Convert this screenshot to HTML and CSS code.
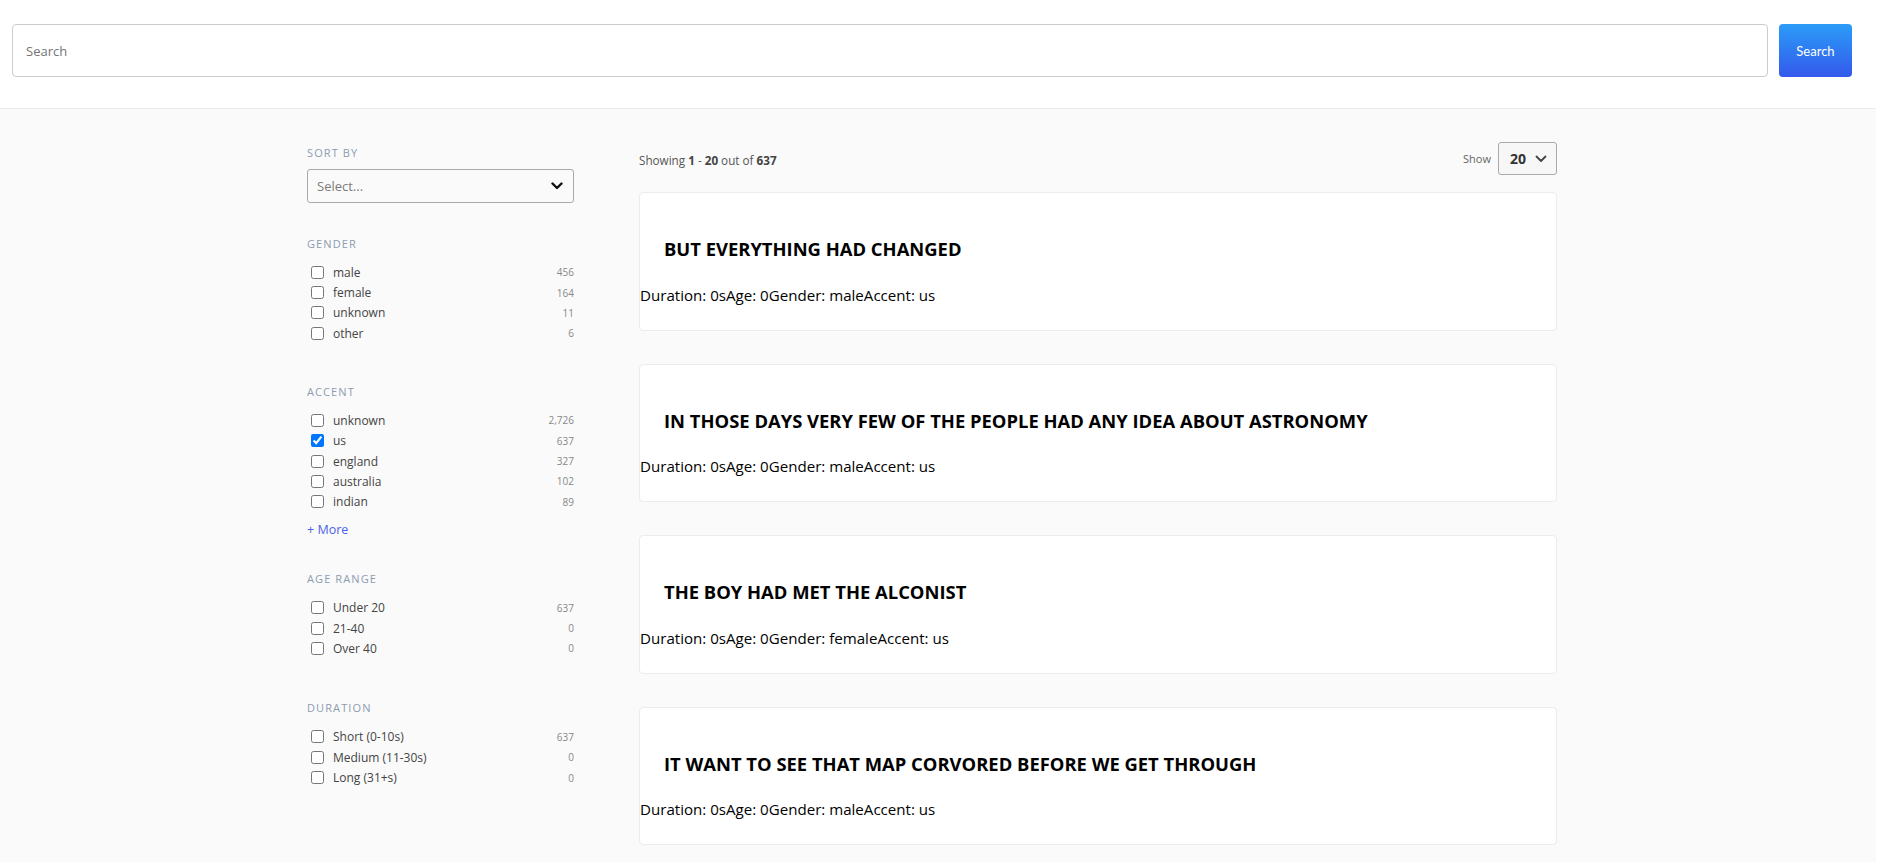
FILE: index.html
```html
<!DOCTYPE html>
<html lang="en">
<head>
<meta charset="utf-8">
<title>Search</title>
<link rel="stylesheet" href="styles.css">
</head>
<body>
<div class="page">
  <header class="topbar">
    <input class="search-input" type="text" placeholder="Search">
    <button class="search-btn">Search</button>
  </header>
  <div class="layout">
    <aside class="sidebar">
      <div class="sort">
        <div class="section-title">Sort by</div>
        <div class="select">
          <span class="select-placeholder">Select...</span>
          <svg class="chev" width="12" height="8" viewBox="0 0 12 8"><path d="M1.5 1.5 L6 6 L10.5 1.5" fill="none" stroke="#111" stroke-width="2.4" stroke-linecap="round" stroke-linejoin="round"/></svg>
        </div>
      </div>

      <div class="filter">
        <div class="section-title">Gender</div>
        <ul class="options">
          <li><label><input type="checkbox"><span>male</span></label><span class="count">456</span></li>
          <li><label><input type="checkbox"><span>female</span></label><span class="count">164</span></li>
          <li><label><input type="checkbox"><span>unknown</span></label><span class="count">11</span></li>
          <li><label><input type="checkbox"><span>other</span></label><span class="count">6</span></li>
        </ul>
      </div>

      <div class="filter">
        <div class="section-title">Accent</div>
        <ul class="options">
          <li><label><input type="checkbox"><span>unknown</span></label><span class="count">2,726</span></li>
          <li><label><input type="checkbox" checked><span>us</span></label><span class="count">637</span></li>
          <li><label><input type="checkbox"><span>england</span></label><span class="count">327</span></li>
          <li><label><input type="checkbox"><span>australia</span></label><span class="count">102</span></li>
          <li><label><input type="checkbox"><span>indian</span></label><span class="count">89</span></li>
        </ul>
        <a class="more" href="#">+ More</a>
      </div>

      <div class="filter after-more">
        <div class="section-title">Age range</div>
        <ul class="options">
          <li><label><input type="checkbox"><span>Under 20</span></label><span class="count">637</span></li>
          <li><label><input type="checkbox"><span>21-40</span></label><span class="count">0</span></li>
          <li><label><input type="checkbox"><span>Over 40</span></label><span class="count">0</span></li>
        </ul>
      </div>

      <div class="filter last">
        <div class="section-title">Duration</div>
        <ul class="options">
          <li><label><input type="checkbox"><span>Short (0-10s)</span></label><span class="count">637</span></li>
          <li><label><input type="checkbox"><span>Medium (11-30s)</span></label><span class="count">0</span></li>
          <li><label><input type="checkbox"><span>Long (31+s)</span></label><span class="count">0</span></li>
        </ul>
      </div>
    </aside>

    <main class="results">
      <div class="results-bar">
        <div class="stats">Showing <b>1</b> - <b>20</b> out of <b>637</b></div>
        <div class="show">
          <span>Show</span>
          <div class="show-select">
            <b>20</b>
            <svg width="12" height="8" viewBox="0 0 12 8"><path d="M1.5 1.5 L6 6 L10.5 1.5" fill="none" stroke="#444" stroke-width="1.8" stroke-linecap="round" stroke-linejoin="round"/></svg>
          </div>
        </div>
      </div>

      <div class="card">
        <div class="card-head"><h3>BUT EVERYTHING HAD CHANGED</h3></div>
        <div class="card-meta">Duration: 0sAge: 0Gender: maleAccent: us</div>
      </div>
      <div class="card">
        <div class="card-head"><h3>IN THOSE DAYS VERY FEW OF THE PEOPLE HAD ANY IDEA ABOUT ASTRONOMY</h3></div>
        <div class="card-meta">Duration: 0sAge: 0Gender: maleAccent: us</div>
      </div>
      <div class="card">
        <div class="card-head"><h3>THE BOY HAD MET THE ALCONIST</h3></div>
        <div class="card-meta">Duration: 0sAge: 0Gender: femaleAccent: us</div>
      </div>
      <div class="card">
        <div class="card-head"><h3>IT WANT TO SEE THAT MAP CORVORED BEFORE WE GET THROUGH</h3></div>
        <div class="card-meta">Duration: 0sAge: 0Gender: maleAccent: us</div>
      </div>
    </main>
  </div>
</div>
</body>
</html>
```
FILE: styles.css
```css
* { box-sizing: border-box; }
html, body {
  margin: 0;
  padding: 0;
  height: 100%;
  background: #ffffff;
  font-family: "Open Sans", "Noto Sans", sans-serif;
  color: #333;
}
.page {
  width: 1876px;
  min-height: 100%;
  background: #fafafa;
}
.topbar {
  display: flex;
  align-items: stretch;
  gap: 11px;
  padding: 24px 24px 31px 12px;
  background: #fff;
  border-bottom: 1px solid #ebebeb;
}
.search-input {
  flex: 1;
  height: 53px;
  border: 1px solid #cccccc;
  border-radius: 4px;
  padding: 0 13px;
  font-family: inherit;
  font-size: 13px;
  color: #333;
  outline: none;
}
.search-input::placeholder { color: #757575; }
.search-btn {
  width: 73px;
  height: 53px;
  border: none;
  border-radius: 4px;
  background: linear-gradient(180deg, #2b9cf8 0%, #3359eb 100%);
  color: #fff;
  font-family: Lato, "Open Sans", sans-serif;
  font-size: 13px;
  padding: 0;
}
.layout {
  display: flex;
  gap: 65px;
  width: 1250px;
  margin-left: 307px;
  padding-top: 33px;
  padding-bottom: 20px;
}
.sidebar {
  width: 267px;
  flex: none;
  padding-top: 3.5px;
}
.section-title {
  font-size: 11px;
  line-height: 14px;
  letter-spacing: 0.1em;
  color: #8d9cb0;
  text-transform: uppercase;
}
.select {
  margin-top: 9px;
  height: 34px;
  border: 1px solid #a8a8a8;
  border-radius: 3px;
  background: #fafafa;
  display: flex;
  align-items: center;
  justify-content: space-between;
  padding: 0 10px 0 9px;
}
.select-placeholder {
  font-size: 13px;
  color: #7a7a7a;
}
.filter { margin-top: 34px; }
.filter + .filter { margin-top: 41px; }
.filter.after-more { margin-top: 34px; }
.filter.last { margin-top: 42.5px; }
.options {
  list-style: none;
  margin: 11.5px 0 0;
  padding: 0;
}
.options li {
  display: flex;
  align-items: center;
  justify-content: space-between;
  height: 20.4px;
}
.options label {
  display: flex;
  align-items: center;
  font-size: 12px;
  color: #444;
}
.options input {
  margin: 0 9px 0 4px;
  width: 13px;
  height: 13px;
}
.count {
  font-size: 10px;
  color: #888;
}
.more {
  display: block;
  margin-top: 10px;
  line-height: 16px;
  font-size: 12.5px;
  color: #4a62e8;
  text-decoration: none;
}
.results {
  width: 918px;
  flex: none;
}
.results-bar {
  display: flex;
  align-items: center;
  justify-content: space-between;
  height: 33px;
  margin-bottom: 17px;
}
.stats {
  font-size: 11.7px;
  color: #555;
  padding-top: 3px;
}
.stats b { color: #444; }
.show {
  display: flex;
  align-items: center;
  gap: 7px;
  font-size: 11px;
  color: #666;
}
.show-select {
  width: 59px;
  height: 33px;
  border: 1px solid #aaa;
  border-radius: 3px;
  background: #f7f7f7;
  display: flex;
  align-items: center;
  gap: 9px;
  padding-left: 11px;
}
.show-select b {
  font-size: 14px;
  color: #333;
}
.card {
  background: #fff;
  border: 1px solid #ececec;
  border-radius: 4px;
  height: 138.5px;
  margin-bottom: 33px;
  color: #000;
}
.card-head { padding: 44px 24px 0; }
.card-head h3 {
  margin: 0;
  font-size: 18.4px;
  line-height: 24px;
  font-weight: 700;
}
.card-meta {
  margin-top: 22.5px;
  font-size: 15.1px;
  line-height: 22px;
}
```
